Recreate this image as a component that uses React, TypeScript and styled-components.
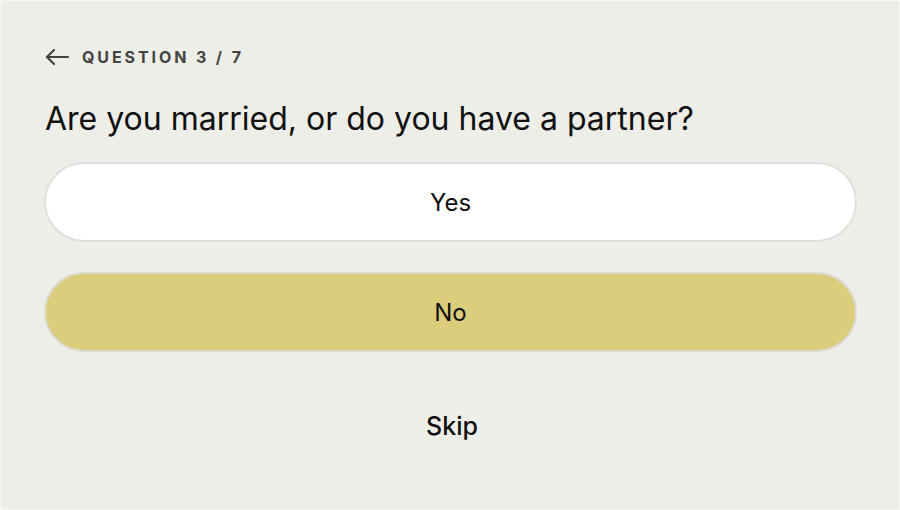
import React from "react";
import styled, { createGlobalStyle } from "styled-components";

const Global = createGlobalStyle`
  html, body { margin: 0; padding: 0; background: #ffffff; }
  body { font-family: Inter, "Noto Sans", sans-serif; }
  * { box-sizing: border-box; }
`;

const Screen = styled.div`
  width: 900px;
  height: 510px;
  background: #eeeee9;
  border: 1px solid #f6f6f3;
  padding: 40px 42px 0 43px;
  display: flex;
  flex-direction: column;
`;

const Header = styled.div`
  display: flex;
  align-items: center;
  gap: 12px;
  height: 32px;
  color: #444441;
`;

const BackButton = styled.button`
  border: none;
  background: none;
  padding: 0;
  display: flex;
  align-items: center;
  cursor: pointer;
  color: #444441;
`;

const Counter = styled.span`
  font-size: 16px;
  font-weight: 700;
  letter-spacing: 2.9px;
  text-transform: uppercase;
`;

const Question = styled.h1`
  margin: 26px 0 0 1px;
  font-size: 32px;
  font-weight: 400;
  color: #111111;
  line-height: 40px;
`;

const Options = styled.div`
  display: flex;
  flex-direction: column;
  gap: 30px;
  margin-top: 23px;
`;

const Option = styled.button<{ $selected?: boolean }>`
  width: 100%;
  height: 80px;
  border-radius: 40px;
  border: 2px solid ${(p) => (p.$selected ? "#dddad0" : "#dfdfdc")};
  background: ${(p) => (p.$selected ? "#dccd7c" : "#ffffff")};
  font-family: Inter, "Noto Sans", sans-serif;
  font-size: 24px;
  color: #111111;
  cursor: pointer;
`;

const SkipButton = styled.button`
  align-self: center;
  margin-top: 58px;
  margin-left: 3px;
  border: none;
  background: none;
  font-family: Inter, "Noto Sans", sans-serif;
  font-size: 25px;
  font-weight: 500;
  color: #111111;
  cursor: pointer;
`;

export default function App() {
  return (
    <>
      <Global />
      <Screen>
        <Header>
          <BackButton aria-label="Back">
            <svg width="26" height="18" viewBox="0 0 26 18" fill="none" stroke="currentColor" strokeWidth="2.2" strokeLinecap="round" strokeLinejoin="round">
              <path d="M24 9H3" />
              <path d="M10 2L3 9l7 7" />
            </svg>
          </BackButton>
          <Counter>Question 3 / 7</Counter>
        </Header>
        <Question>Are you married, or do you have a partner?</Question>
        <Options>
          <Option>Yes</Option>
          <Option $selected>No</Option>
        </Options>
        <SkipButton>Skip</SkipButton>
      </Screen>
    </>
  );
}
